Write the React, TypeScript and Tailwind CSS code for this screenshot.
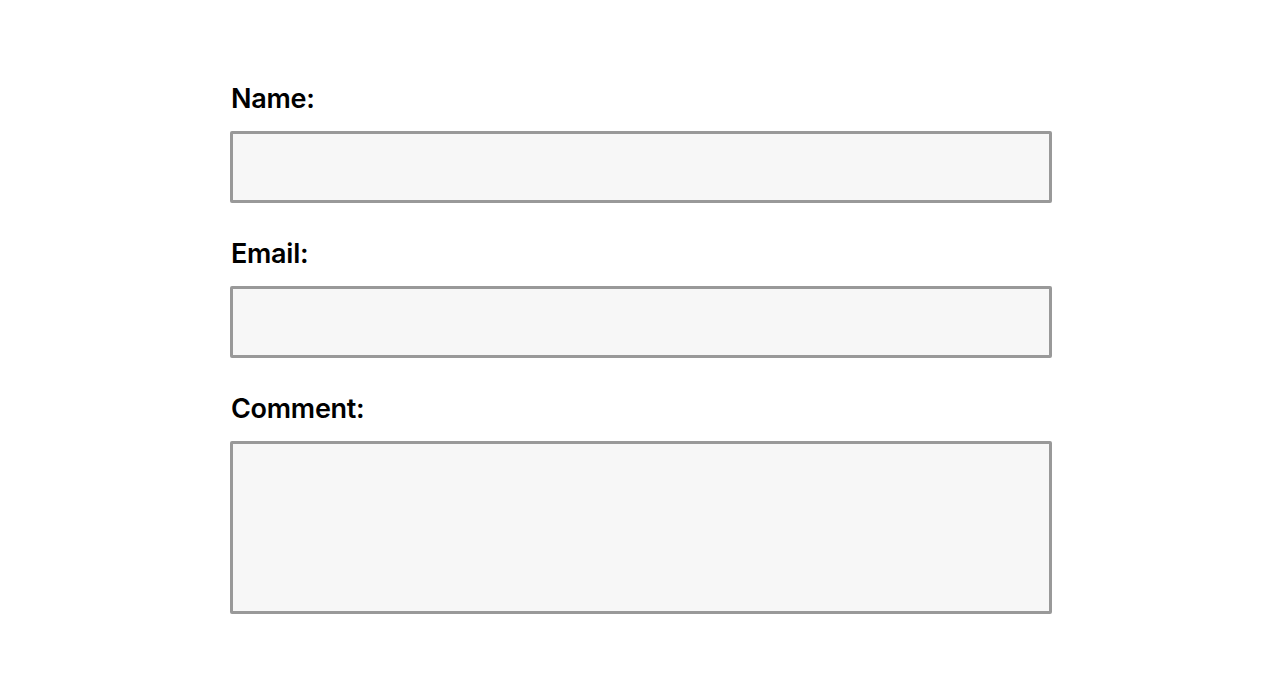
export default function App() {
  const fields = [
    { label: "Name:", h: "h-[72px]", area: false },
    { label: "Email:", h: "h-[72px]", area: false },
    { label: "Comment:", h: "h-[173px]", area: true },
  ];

  return (
    <div className="min-h-[700px] bg-white pt-[82px] font-['Inter',sans-serif]">
      <form className="ml-[230px] w-[822px]">
        {fields.map((f) => (
          <div key={f.label} className="mb-[34px]">
            <label className="block mb-4 pl-[1px] text-[27px] leading-[33px] font-semibold tracking-[-0.01em] text-black">
              {f.label}
            </label>
            {f.area ? (
              <textarea
                className={`block w-full ${f.h} resize-none rounded-[2px] border-[3px] border-[#999999] bg-[#f7f7f7] outline-none`}
              />
            ) : (
              <input
                type="text"
                className={`block w-full ${f.h} rounded-[2px] border-[3px] border-[#999999] bg-[#f7f7f7] outline-none`}
              />
            )}
          </div>
        ))}
      </form>
    </div>
  );
}
